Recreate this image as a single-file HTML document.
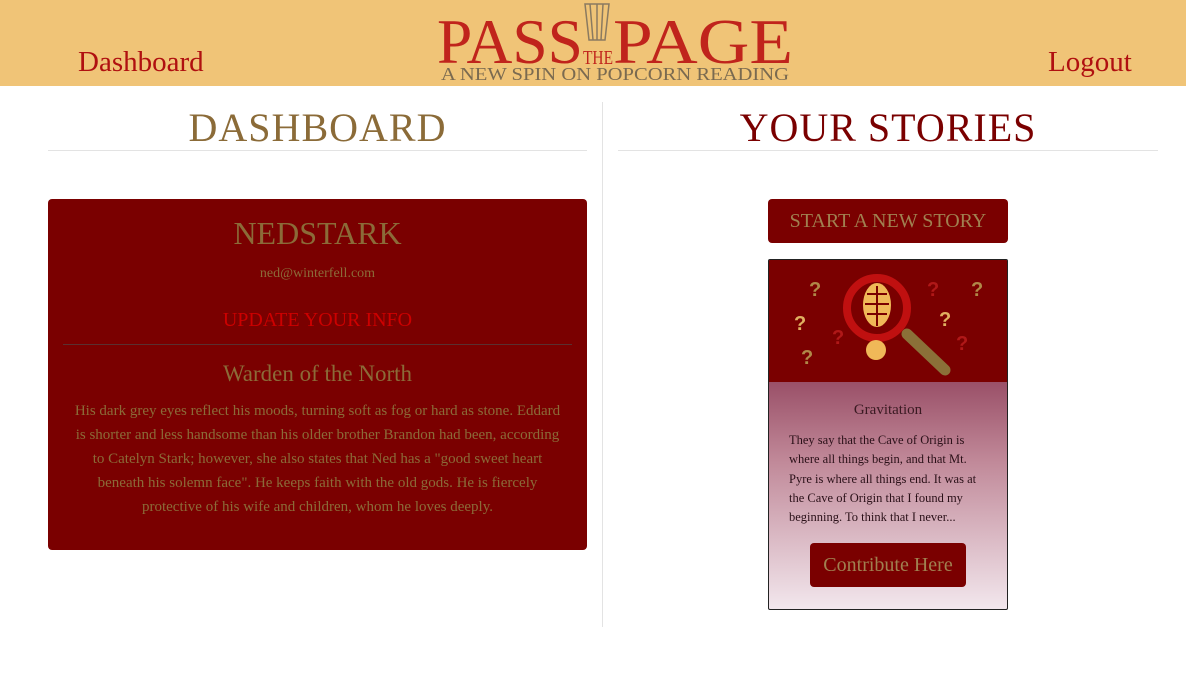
<!DOCTYPE html>
<html><head><meta charset="utf-8"><style>
*{box-sizing:border-box;margin:0;padding:0}
body{width:1186px;height:674px;background:#fff;font-family:"Liberation Serif",serif;position:relative;overflow:hidden}
.hdr{position:absolute;left:0;top:0;width:1186px;height:86px;background:#f0c477}
.nav{position:absolute;top:46px;font-size:29px;color:#b01010}
.logo{position:absolute;left:437px;top:0;width:356px;height:86px}
.abs{position:absolute}
h1{position:absolute;font-weight:normal;font-size:40px;text-align:center;letter-spacing:1px}
.hr{position:absolute;height:1px;background:#e3e3e3}
</style></head><body>
<div class="hdr"></div>
<div class="nav" style="left:78px">Dashboard</div>
<div class="nav" style="left:1048px">Logout</div>
<svg class="logo" viewBox="0 0 356 86">
<g fill="none" stroke="#8a7a60" stroke-width="1.5"><path d="M148 4 L172 4 L168 40 L152 40 Z"/><path d="M153 4 L156 40 M160 4 L160 40 M166 4 L164 40"/></g>
<text x="0" y="63" font-family="Liberation Serif" font-size="64" fill="#c0241c" textLength="146" lengthAdjust="spacingAndGlyphs">PASS</text>
<text x="146" y="64" font-family="Liberation Serif" font-size="20" fill="#c0241c" textLength="30" lengthAdjust="spacingAndGlyphs">THE</text>
<text x="176" y="63" font-family="Liberation Serif" font-size="64" fill="#c0241c" textLength="180" lengthAdjust="spacingAndGlyphs">PAGE</text>
<text x="4" y="80" font-family="Liberation Serif" font-size="18" fill="#7a6a50" textLength="348" lengthAdjust="spacingAndGlyphs">A NEW SPIN ON POPCORN READING</text>
</svg>
<h1 style="left:48px;width:539px;top:104px;color:#8b6b38">DASHBOARD</h1>
<div class="hr" style="left:48px;width:539px;top:150px"></div>
<h1 style="left:618px;width:540px;top:104px;color:#7a0000">YOUR STORIES</h1>
<div class="hr" style="left:618px;width:540px;top:150px"></div>
<div class="abs" style="left:602px;top:102px;width:1px;height:525px;background:#e3e3e3"></div>

<div class="abs" style="left:48px;top:199px;width:539px;height:351px;background:#7a0000;border-radius:4px;text-align:center;color:#8b6b38">
<div style="margin-top:16px;font-size:32px">NEDSTARK</div>
<div style="margin-top:14px;font-size:14px">ned@winterfell.com</div>
<div style="margin-top:27px;font-size:20px;color:#c00">UPDATE YOUR INFO</div>
<div style="margin:12px 15px 0;height:1px;background:#5a3030"></div>
<div style="margin-top:16px;font-size:23px">Warden of the North</div>
<div style="margin:12px 20px 0;font-size:15px;line-height:24px">His dark grey eyes reflect his moods, turning soft as fog or hard as stone. Eddard is shorter and less handsome than his older brother Brandon had been, according to Catelyn Stark; however, she also states that Ned has a "good sweet heart beneath his solemn face". He keeps faith with the old gods. He is fiercely protective of his wife and children, whom he loves deeply.</div>
</div>

<div class="abs" style="left:768px;top:199px;width:240px;height:44px;background:#7a0000;border-radius:4px;color:#a08050;font-size:20px;text-align:center;line-height:44px">START A NEW STORY</div>

<div class="abs" style="left:768px;top:259px;width:240px;height:351px;border:1px solid #222;border-radius:2px;overflow:hidden;background:linear-gradient(#9a5068 122px,#c08898 200px,#f3e8ee 351px)">
<div style="height:122px;background:#7a0000;position:relative">
<svg width="240" height="122" viewBox="0 0 240 122">
<g font-family="Liberation Sans" font-weight="bold" font-size="20">
<text x="40" y="36" fill="#b08848">?</text><text x="25" y="70" fill="#e0b060">?</text><text x="32" y="104" fill="#b08848">?</text>
<text x="63" y="84" fill="#b01818">?</text><text x="158" y="36" fill="#b01818">?</text><text x="202" y="36" fill="#b08848">?</text>
<text x="170" y="66" fill="#e0b060">?</text><text x="187" y="90" fill="#b01818">?</text></g>
<line x1="138" y1="74" x2="176" y2="110" stroke="#8b7038" stroke-width="11" stroke-linecap="round"/>
<circle cx="108" cy="48" r="30" fill="#7a0000" stroke="#c01010" stroke-width="8"/>
<ellipse cx="108" cy="45" rx="14" ry="22" fill="#f0b858"/>
<path d="M98 34h20M96 44h24M98 54h20M108 26v40" stroke="#7a0000" stroke-width="2"/>
<ellipse cx="107" cy="90" rx="10" ry="10" fill="#f0b858"/>
</svg></div>
<div style="text-align:center;margin-top:20px;font-size:15px;color:#3a1a22">Gravitation</div>
<div style="margin:12px 20px 0;font-size:12.5px;line-height:19.3px;color:#2a1018">They say that the Cave of Origin is where all things begin, and that Mt. Pyre is where all things end. It was at the Cave of Origin that I found my beginning. To think that I never...</div>
<div style="margin:16px auto 0;width:156px;height:44px;background:#7a0000;border-radius:4px;color:#a08050;font-size:20px;text-align:center;line-height:44px">Contribute Here</div>
</div>
</body></html>
